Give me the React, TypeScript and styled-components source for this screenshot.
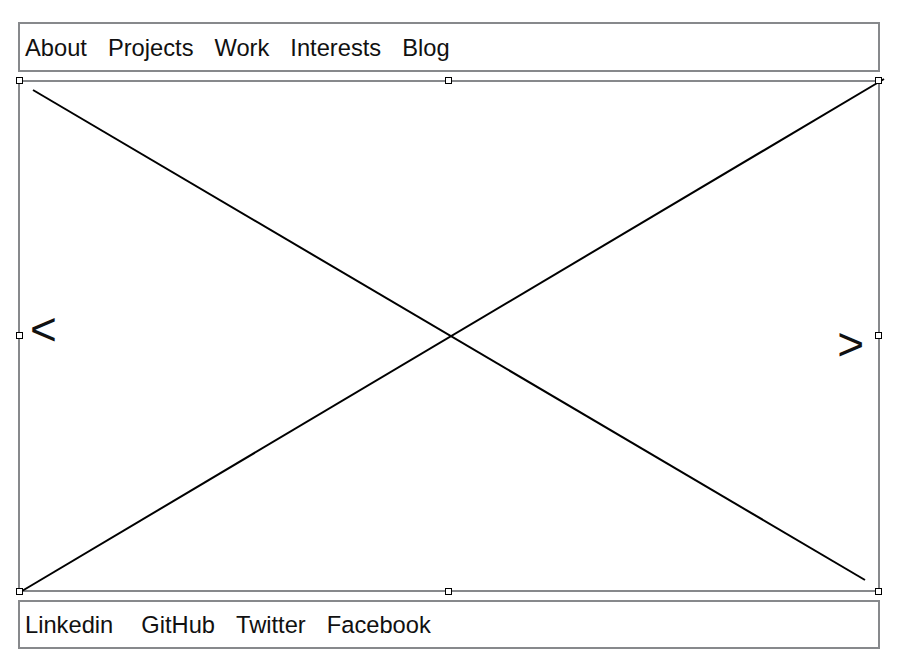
import React from "react";
import styled, { createGlobalStyle } from "styled-components";

const GlobalStyle = createGlobalStyle`
  body {
    margin: 0;
    background: #ffffff;
    font-family: "Liberation Sans", Arial, sans-serif;
    color: #111111;
  }
`;

const BORDER = "#87898c";

const Page = styled("div")`
  display: flex;
  flex-direction: column;
  gap: 8px;
  width: 862px;
  padding: 22px 0 0 18px;
`;

const LinkBar = styled("nav")<{ $height: number }>`
  box-sizing: border-box;
  display: flex;
  align-items: center;
  gap: 21px;
  height: ${(p) => p.$height}px;
  padding: 2px 5px 0;
  border: 2px solid ${BORDER};
  font-size: 23.7px;
`;

const BarLink = styled("span")<{ $extra?: number }>`
  margin-right: ${(p) => p.$extra || 0}px;
  white-space: nowrap;
`;

const Stage = styled("div")`
  position: relative;
  box-sizing: border-box;
  display: flex;
  justify-content: space-between;
  align-items: center;
  height: 512px;
  padding: 0 14px 0 10px;
  border: 2px solid ${BORDER};
`;

const Cross = styled("svg")`
  position: absolute;
  left: -2px;
  top: -2px;
  overflow: visible;
`;

const Arrow = styled("span")<{ $shift: number }>`
  position: relative;
  z-index: 1;
  font-size: 46px;
  line-height: 1;
  transform: translateY(${(p) => p.$shift}px);
`;

const Handle = styled("span")`
  position: absolute;
  z-index: 2;
  box-sizing: border-box;
  width: 7px;
  height: 7px;
  margin: -3px 0 0 -3px;
  background: #ffffff;
  border: 1px solid #000000;
`;

const HANDLE_X = [1, 430, 860];
const HANDLE_Y = [0, 255, 511];

const handles = HANDLE_Y.flatMap((y) =>
  HANDLE_X.filter((x) => !(y === 255 && x === 430)).map((x) => ({ x, y }))
);

const App: React.FC = () => {
  return (
    <React.Fragment>
      <GlobalStyle />
      <Page>
        <LinkBar $height={50}>
          <BarLink>About</BarLink>
          <BarLink>Projects</BarLink>
          <BarLink>Work</BarLink>
          <BarLink>Interests</BarLink>
          <BarLink>Blog</BarLink>
        </LinkBar>
        <Stage>
          <Cross width={862} height={512}>
            <line x1={15} y1={10} x2={847} y2={500} stroke="#000" strokeWidth={2} />
            <line x1={4} y1={511} x2={866} y2={-1} stroke="#000" strokeWidth={2} />
          </Cross>
          <Arrow $shift={-7}>&lt;</Arrow>
          <Arrow $shift={8}>&gt;</Arrow>
          {handles.map(({ x, y }) => (
            <Handle key={`${x}-${y}`} style={{ left: x - 2, top: y - 2 }} />
          ))}
        </Stage>
        <LinkBar $height={49}>
          <BarLink $extra={7}>Linkedin</BarLink>
          <BarLink>GitHub</BarLink>
          <BarLink>Twitter</BarLink>
          <BarLink>Facebook</BarLink>
        </LinkBar>
      </Page>
    </React.Fragment>
  );
};

export default App;
